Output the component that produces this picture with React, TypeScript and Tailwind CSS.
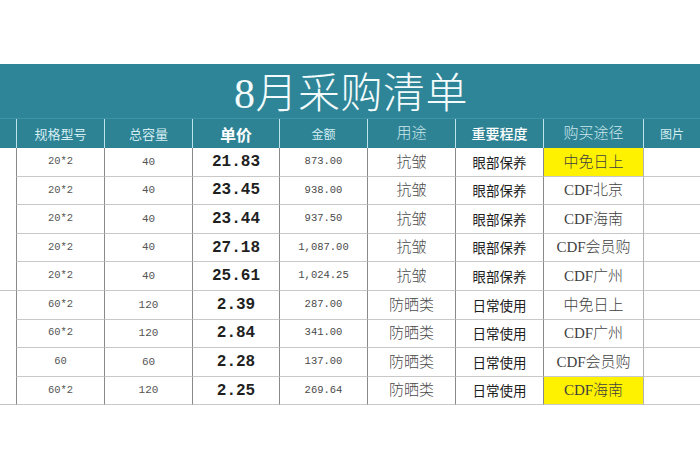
import React from "react";

const W = ["w-[16px]", "w-[88px]", "w-[88px]", "w-[87px]", "w-[88px]", "w-[88px]", "w-[88px]", "w-[100px]", "flex-1"];

type Row = {
  spec: string;
  cap: string;
  price: string;
  amt: string;
  use: string;
  lvl: string;
  ch: string;
  yellow?: boolean;
};

const rows: Row[] = [
  { spec: "20*2", cap: "40", price: "21.83", amt: "873.00", use: "抗皱", lvl: "眼部保养", ch: "中免日上", yellow: true },
  { spec: "20*2", cap: "40", price: "23.45", amt: "938.00", use: "抗皱", lvl: "眼部保养", ch: "CDF北京" },
  { spec: "20*2", cap: "40", price: "23.44", amt: "937.50", use: "抗皱", lvl: "眼部保养", ch: "CDF海南" },
  { spec: "20*2", cap: "40", price: "27.18", amt: "1,087.00", use: "抗皱", lvl: "眼部保养", ch: "CDF会员购" },
  { spec: "20*2", cap: "40", price: "25.61", amt: "1,024.25", use: "抗皱", lvl: "眼部保养", ch: "CDF广州" },
  { spec: "60*2", cap: "120", price: "2.39", amt: "287.00", use: "防晒类", lvl: "日常使用", ch: "中免日上" },
  { spec: "60*2", cap: "120", price: "2.84", amt: "341.00", use: "防晒类", lvl: "日常使用", ch: "CDF广州" },
  { spec: "60", cap: "60", price: "2.28", amt: "137.00", use: "防晒类", lvl: "日常使用", ch: "CDF会员购" },
  { spec: "60*2", cap: "120", price: "2.25", amt: "269.64", use: "防晒类", lvl: "日常使用", ch: "CDF海南", yellow: true },
];

const sans = "font-['Noto_Sans_CJK_SC',sans-serif]";
const serif = "font-['Liberation_Serif','Noto_Sans_CJK_SC',serif]";
const mono = "font-['Liberation_Mono','Noto_Sans_CJK_SC',monospace]";

export default function App() {
  return (
    <div className="w-[700px] h-[470px] bg-white overflow-hidden flex flex-col">
      <div className="h-[64px] shrink-0 bg-white" />
      <div className="h-[54px] shrink-0 bg-[#2e8597] flex items-center justify-center pt-[6px] pl-[2px]">
        <span className={`${serif} font-light text-[42px] leading-none text-[#f4fbfc] tracking-[0.5px]`}>8月采购清单</span>
      </div>
      <div className="h-[30px] shrink-0 bg-[#2d8294] flex border-t border-[#3b95a6]">
        <div className={`${W[0]} shrink-0`} />
        <div className={`${W[1]} shrink-0 border-l border-[#b9e4ec] flex items-center justify-center ${sans} text-[13px] text-[#d3edf2]`}>规格型号</div>
        <div className={`${W[2]} shrink-0 border-l border-[#b9e4ec] flex items-center justify-center ${sans} text-[13px] text-[#d3edf2]`}>总容量</div>
        <div className={`${W[3]} shrink-0 border-l border-[#b9e4ec] flex items-center justify-center ${sans} font-bold text-[16px] text-white`}>单价</div>
        <div className={`${W[4]} shrink-0 border-l border-[#b9e4ec] flex items-center justify-center ${sans} text-[12px] text-[#d3edf2]`}>金额</div>
        <div className={`${W[5]} shrink-0 border-l border-[#b9e4ec] flex items-center justify-center ${serif} font-light text-[15px] text-[#cfe9ee]`}>用途</div>
        <div className={`${W[6]} shrink-0 border-l border-[#b9e4ec] flex items-center justify-center ${sans} font-medium text-[14px] text-white`}>重要程度</div>
        <div className={`${W[7]} shrink-0 border-l border-[#b9e4ec] flex items-center justify-center ${serif} font-light text-[15px] text-[#cfe9ee]`}>购买途径</div>
        <div className={`${W[8]} border-l border-[#b9e4ec] flex items-center justify-center ${sans} text-[12px] text-[#d3edf2]`}>图片</div>
      </div>
      {rows.map((r, i) => {
        const groupEnd = i === 4 || i === 8;
        return (
          <div key={i} className="h-[28.6px] shrink-0 flex">
            <div className={`${W[0]} shrink-0 ${groupEnd ? "border-b border-[#c4c4c4]" : ""}`} />
            <div className={`${W[1]} shrink-0 border-l border-b border-l-[#8a8a8a] border-b-[#c8c8c8] flex items-center justify-center ${mono} text-[10.5px] text-[#555]`}>{r.spec}</div>
            <div className={`${W[2]} shrink-0 border-l border-b border-l-[#8a8a8a] border-b-[#c8c8c8] flex items-center justify-center ${mono} text-[11px] text-[#555]`}>{r.cap}</div>
            <div className={`${W[3]} shrink-0 border-l border-b border-l-[#8a8a8a] border-b-[#c8c8c8] flex items-center justify-center ${mono} font-bold text-[16px] text-[#1f1f1f]`}>{r.price}</div>
            <div className={`${W[4]} shrink-0 border-l border-b border-l-[#8a8a8a] border-b-[#c8c8c8] flex items-center justify-center ${mono} text-[10.5px] text-[#4a4a4a]`}>{r.amt}</div>
            <div className={`${W[5]} shrink-0 border-l border-b border-l-[#8a8a8a] border-b-[#c8c8c8] flex items-center justify-center ${serif} font-light text-[15px] text-[#4a4a4a]`}>{r.use}</div>
            <div className={`${W[6]} shrink-0 border-l border-b border-l-[#8a8a8a] border-b-[#c8c8c8] flex items-center justify-center ${sans} text-[13.5px] text-[#1e1e1e]`}>{r.lvl}</div>
            <div className={`${W[7]} shrink-0 border-l border-b border-l-[#8a8a8a] border-b-[#c8c8c8] flex items-center justify-center ${serif} font-light text-[15px] text-[#3f3f3f] ${r.yellow ? "bg-[#fff200]" : ""}`}>{r.ch}</div>
            <div className={`${W[8]} border-l border-b border-l-[#b0b0b0] border-b-[#c8c8c8]`} />
          </div>
        );
      })}
      <div className="flex-1 bg-white" />
    </div>
  );
}
